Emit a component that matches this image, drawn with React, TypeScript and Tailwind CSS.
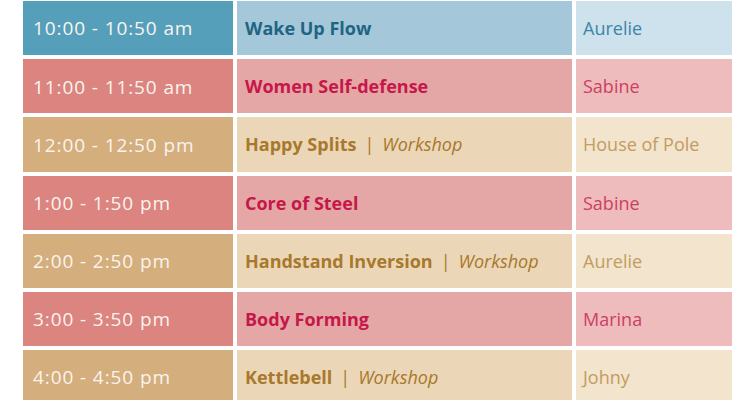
import React from 'react';

type Tone = 'blue' | 'red' | 'tan';

const tones: Record<Tone, { time: string; cls: string; clsText: string; who: string; whoText: string }> = {
  blue: {
    time: 'bg-[#569fbb]',
    cls: 'bg-[#a4c7d9]',
    clsText: 'text-[#1f6583]',
    who: 'bg-[#cde2ed]',
    whoText: 'text-[#3b86a6]',
  },
  red: {
    time: 'bg-[#db8480]',
    cls: 'bg-[#e4a7a5]',
    clsText: 'text-[#c6174a]',
    who: 'bg-[#eebcbc]',
    whoText: 'text-[#cc4064]',
  },
  tan: {
    time: 'bg-[#d4ae7d]',
    cls: 'bg-[#ebd7b7]',
    clsText: 'text-[#a8782c]',
    who: 'bg-[#f2e4cd]',
    whoText: 'text-[#c29c60]',
  },
};

const rows: { time: string; name: string; workshop?: boolean; who: string; tone: Tone }[] = [
  { time: '10:00 - 10:50 am', name: 'Wake Up Flow', who: 'Aurelie', tone: 'blue' },
  { time: '11:00 - 11:50 am', name: 'Women Self-defense', who: 'Sabine', tone: 'red' },
  { time: '12:00 - 12:50 pm', name: 'Happy Splits', workshop: true, who: 'House of Pole', tone: 'tan' },
  { time: '1:00 - 1:50 pm', name: 'Core of Steel', who: 'Sabine', tone: 'red' },
  { time: '2:00 - 2:50 pm', name: 'Handstand Inversion', workshop: true, who: 'Aurelie', tone: 'tan' },
  { time: '3:00 - 3:50 pm', name: 'Body Forming', who: 'Marina', tone: 'red' },
  { time: '4:00 - 4:50 pm', name: 'Kettlebell', workshop: true, who: 'Johny', tone: 'tan' },
];

export default function App() {
  return (
    <div className="w-[750px] h-[400px] overflow-hidden bg-white pl-[23px] pt-[1px] font-['Open_Sans',sans-serif] text-[18px]">
      <div className="flex flex-col gap-[4px]">
        {rows.map((r, i) => {
          const t = tones[r.tone];
          return (
            <div key={i} className="flex gap-[4px] h-[54.2px] shrink-0">
              <div className={`w-[210px] flex items-center pl-[10px] pt-[1px] text-[19px] text-[#f9f4ee] tracking-[0.9px] ${t.time}`}>
                {r.time}
              </div>
              <div className={`w-[335px] flex items-center pl-[8px] pt-[1px] ${t.cls} ${t.clsText}`}>
                <span className="font-bold">{r.name}</span>
                {r.workshop && (
                  <>
                    <span className="mx-[8px]">|</span>
                    <span className="italic">Workshop</span>
                  </>
                )}
              </div>
              <div className={`w-[156px] flex items-center pl-[7px] pt-[1px] ${t.who} ${t.whoText}`}>
                {r.who}
              </div>
            </div>
          );
        })}
      </div>
    </div>
  );
}
